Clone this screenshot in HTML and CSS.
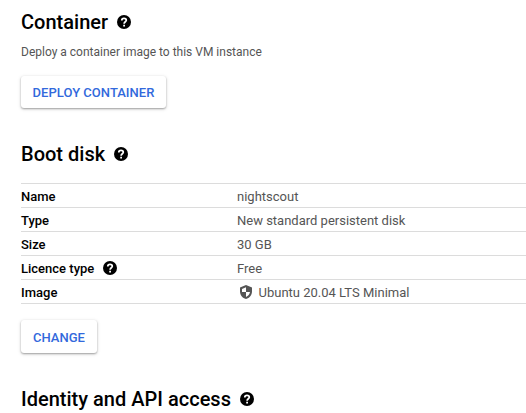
FILE: index.html
```html
<!DOCTYPE html>
<html lang="en">
<head>
<meta charset="utf-8">
<title>VM instance</title>
<link rel="stylesheet" href="styles.css">
</head>
<body>
<svg width="0" height="0" class="defs" aria-hidden="true">
  <symbol id="help" viewBox="0 0 14 14"><circle cx="7" cy="7" r="7"/><path d="M4.8 5.4C4.8 4.1 5.7 3.4 7 3.4s2.3.7 2.3 1.9C9.300 6.700 7.100 6.800 7.100 8.700" fill="none" stroke="#fff" stroke-width="1.7"/><path d="M6.200 9.700h1.800v1.700h-1.800z" fill="#fff"/></symbol>
  <symbol id="shield" viewBox="0 0 12 14"><path fill-rule="evenodd" d="M6 0L0 2.400V6.500C0 10.100 2.500 13.200 6 14c3.500-.8 6-3.900 6-7.500V2.400zM6 2.300V7H2V3.900zM6 7h4c-.3 2.300-1.800 4.100-4 4.900z"/></symbol>
</svg>
<main class="page">
  <section class="container-section">
    <h2>Container <svg class="help"><use href="#help"/></svg></h2>
    <p class="hint">Deploy a container image to this VM instance</p>
    <button class="btn deploy">DEPLOY CONTAINER</button>
  </section>
  <section class="disk-section">
    <h2>Boot disk <svg class="help"><use href="#help"/></svg></h2>
    <dl class="specs">
      <div class="row"><dt>Name</dt><dd>nightscout</dd></div>
      <div class="row"><dt>Type</dt><dd>New standard persistent disk</dd></div>
      <div class="row"><dt>Size</dt><dd>30 GB</dd></div>
      <div class="row"><dt>Licence type <svg class="help"><use href="#help"/></svg></dt><dd>Free</dd></div>
      <div class="row"><dt>Image</dt><dd><svg class="shield"><use href="#shield"/></svg>Ubuntu 20.04 LTS Minimal</dd></div>
    </dl>
    <button class="btn change">CHANGE</button>
  </section>
  <section class="access-section">
    <h2>Identity and API access <svg class="help"><use href="#help"/></svg></h2>
  </section>
</main>
</body>
</html>
```
FILE: styles.css
```css
* { box-sizing: border-box; }
html, body { margin: 0; height: 100%; overflow: hidden; }
body { background: #fff; color: #000; font-family: Roboto, sans-serif; }
.defs { display: none; }
.page { padding: 10px 0 0 21px; }
h2 { display: flex; align-items: center; gap: 9px; margin: 0; height: 24px; font-size: 20px; line-height: 24px; font-weight: 500; letter-spacing: .01px; white-space: nowrap; }
.help { display: block; width: 14px; height: 14px; fill: #000; flex: none; }
.hint { margin: 10px 0 16px; font-size: 12px; line-height: 16px; color: #555; }
.btn { display: block; height: 32px; padding: 1px 0 0; border: 0; border-radius: 3px; background: #fff; color: #3269dc; font: 500 13px/31px Roboto, sans-serif; letter-spacing: .02px; box-shadow: 0 1px 2px rgba(0, 0, 0, .32), 0 1px 4px rgba(0, 0, 0, .12); }
.deploy { width: 145px; }
.change { width: 76px; height: 33px; }
.disk-section { margin-top: 34px; }
.specs { margin: 17px 0 16px; border-top: 1px solid #dcdcdc; }
.row { display: grid; grid-template-columns: 216px 1fr; height: 24px; border-bottom: 1px solid #dcdcdc; font-size: 13px; line-height: 25px; }
dt, dd { display: flex; align-items: center; margin: 0; }
dt { font-weight: 500; gap: 9px; }
dt .help { margin-bottom: 1px; }
dd { color: #555; }
.shield { width: 12px; height: 14px; margin: 0 6.5px 1px 3px; fill: #555; }
.access-section { margin-top: 34px; }
```
